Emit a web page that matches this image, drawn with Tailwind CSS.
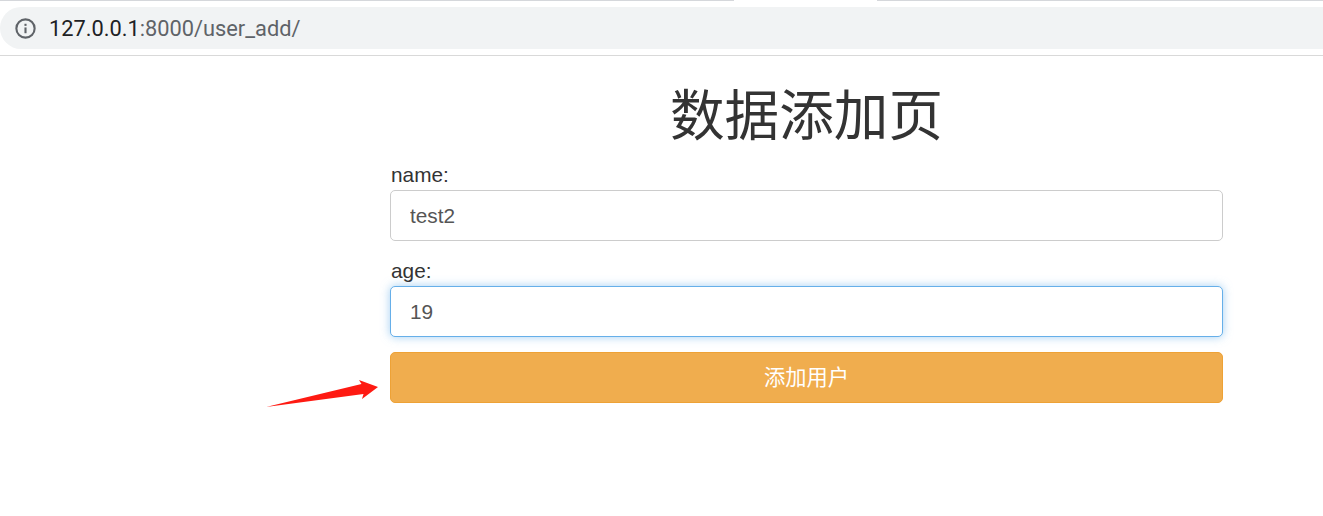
<!DOCTYPE html>
<html lang="zh">
<head>
  <meta charset="UTF-8">
  <title>数据添加页</title>
  <script src="https://cdn.jsdelivr.net/npm/@tailwindcss/browser@4"></script>
</head>
<body class="relative h-[516px] w-[1323px] overflow-hidden bg-white font-['Liberation_Sans','Noto_Sans_CJK_SC',sans-serif] text-[#333]">
  <!-- browser chrome -->
  <div class="h-[56px] border-b border-[#d9d9d9]">
    <div class="flex h-[7px] items-start">
      <div class="h-px w-[734px] bg-[#d5d7db]"></div>
      <div class="h-px w-[143px] bg-white"></div>
      <div class="h-px flex-1 bg-[#d5d7db]"></div>
    </div>
    <div class="flex h-[42px] items-center rounded-l-[21px] bg-[#f1f3f4] pl-[15px]">
      <svg class="h-[21px] w-[21px]" viewBox="0 0 20 20" fill="none">
        <circle cx="10" cy="10" r="8.7" stroke="#5f6368" stroke-width="2"/>
        <rect x="9" y="9" width="2" height="5.5" fill="#5f6368"/>
        <rect x="9" y="5.5" width="2" height="2" fill="#5f6368"/>
      </svg>
      <div class="mt-[2px] ml-[13px] font-['Roboto',sans-serif] text-[21.8px] text-[#5f6368]"><span class="text-[#202124]">127.0.0.1</span>:8000/user_add/</div>
    </div>
  </div>

  <!-- page -->
  <div class="ml-[390px] w-[833px]">
    <h1 class="mt-[25px] h-[71px] text-center text-[54.6px] leading-[71px] font-normal">数据添加页</h1>
    <form>
      <label class="mt-[11px] block h-[23px] pl-px text-[20.8px] leading-[23px]">name:</label>
      <input type="text" value="test2" class="mt-[4px] block h-[51px] w-full rounded-[5px] border border-[#ccc] bg-white px-[19px] text-[20.8px] text-[#555]">
      <label class="mt-[18px] block h-[23px] pl-px text-[20.8px] leading-[23px]">age:</label>
      <input type="text" value="19" class="mt-[4px] block h-[51px] w-full rounded-[5px] border border-[#66afe9] bg-white px-[19px] text-[20.8px] text-[#555] shadow-[0_0_10px_rgba(102,175,233,0.6)] outline-none">
      <button type="button" class="mt-[15px] block h-[51px] w-full rounded-[5px] border border-[#eea236] bg-[#f0ad4e] pt-[2px] text-[21.3px] text-white">添加用户</button>
    </form>
  </div>

  <!-- annotation arrow -->
  <svg class="absolute top-[370px] left-[260px] h-[45px] w-[125px]" viewBox="260 370 125 45">
    <polygon points="266,407 361.5,384 359,380 378,387 362,399 363.5,394" fill="#fe1a12"/>
  </svg>
</body>
</html>
